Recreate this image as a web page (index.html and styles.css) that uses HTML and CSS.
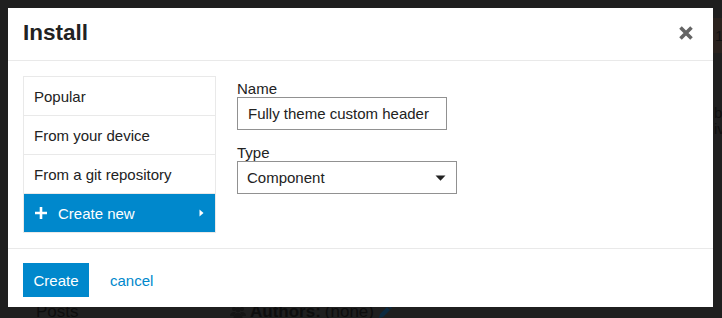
FILE: index.html
```html
<!DOCTYPE html>
<html lang="en">
<head>
<meta charset="utf-8">
<title>Install</title>
<link rel="stylesheet" href="styles.css">
</head>
<body>
<div class="page">
  <div class="page-main">
    <div class="page-row">
      <span class="page-posts">Posts</span>
      <span class="page-authors">
        <svg class="users-icon" width="16" height="12" viewBox="0 0 16 12"><circle cx="4" cy="3" r="2"/><circle cx="12" cy="3" r="2"/><circle cx="8" cy="4" r="2.4"/><path d="M0 10c0-3 2-4 4-4s2 1 2 1-2 1-2 3z"/><path d="M16 10c0-3-2-4-4-4s-2 1-2 1 2 1 2 3z"/><path d="M3.5 12c0-3 2-5 4.5-5s4.5 2 4.5 5z"/></svg>
        <b>Authors:</b> (none)
        <svg class="pencil-icon" width="14" height="14" viewBox="0 0 14 14"><path d="M1 13l1-4 7-7 3 3-7 7zM10 1l1-1 3 3-1 1z"/></svg>
      </span>
    </div>
  </div>
  <aside class="page-side">
    <div class="page-badge">1</div>
    <p class="page-frag">b</p>
    <p class="page-frag">iv</p>
  </aside>
</div>

<div class="modal" role="dialog" aria-labelledby="modal-title">
  <header class="modal-header">
    <h1 id="modal-title" class="modal-title">Install</h1>
    <button class="modal-close" aria-label="close">
      <svg width="16" height="16" viewBox="0 0 16 16"><path d="M2.5 2.5L13.5 13.5M13.5 2.5L2.5 13.5" stroke="#646464" stroke-width="3.6" stroke-linecap="butt"/></svg>
    </button>
  </header>
  <div class="modal-body">
    <ul class="install-options">
      <li class="install-option">Popular</li>
      <li class="install-option">From your device</li>
      <li class="install-option">From a git repository</li>
      <li class="install-option is-active">
        <svg class="plus-icon" width="12" height="12" viewBox="0 0 12 12"><path d="M6 0v12M0 6h12" stroke="#fff" stroke-width="2.6"/></svg>
        <span class="option-label">Create new</span>
        <svg class="caret-right" width="5" height="8" viewBox="0 0 5 8"><path d="M0.5 0.5L4.5 4L0.5 7.5z" fill="#fff"/></svg>
      </li>
    </ul>
    <form class="install-form">
      <label class="field-label" for="theme-name">Name</label>
      <input id="theme-name" class="text-input" type="text" value="Fully theme custom header">
      <label class="field-label" for="theme-type">Type</label>
      <div class="select-box" id="theme-type">
        <span>Component</span>
        <svg width="11" height="6" viewBox="0 0 11 6"><path d="M0.5 0.5h10L5.5 5.8z" fill="#222"/></svg>
      </div>
    </form>
  </div>
  <footer class="modal-footer">
    <button class="btn-primary">Create</button>
    <a class="cancel-link" href="#">cancel</a>
  </footer>
</div>
</body>
</html>
```

FILE: styles.css
```css
* { box-sizing: border-box; }

html, body {
  margin: 0;
  padding: 0;
  background: #1f1f1f;
  font-family: "Liberation Sans", Arial, Helvetica, sans-serif;
  overflow: hidden;
}

/* dimmed page behind the modal */
.page {
  display: grid;
  grid-template-columns: 713px 1fr;
  height: 318px;
  overflow: hidden;
}

.page-main {
  padding-top: 302px;
}

.page-row {
  display: flex;
  align-items: center;
  color: #0d0d0d;
  font-size: 16px;
}

.page-posts {
  margin-left: 36px;
  width: 194px;
  font-size: 17px;
}

.page-authors {
  display: flex;
  align-items: center;
  gap: 4px;
  font-size: 17px;
}

.users-icon { fill: #151515; }
.pencil-icon { fill: #0c2a40; }

.page-side {
  padding-top: 18px;
}

.page-badge {
  height: 35px;
  background: #2a221e;
  color: #111;
  font-size: 15px;
  line-height: 35px;
  padding-left: 2px;
}

.page-frag {
  margin: 0;
  color: #0f0f0f;
  font-size: 15px;
  line-height: 16px;
  padding-left: 1px;
}

.page-frag:first-of-type {
  margin-top: 52px;
}

/* modal */
.modal {
  position: absolute;
  left: 8px;
  top: 8px;
  width: 705px;
  height: 299px;
  background: #fff;
  color: #222;
  display: flex;
  flex-direction: column;
}

.modal-header {
  display: flex;
  align-items: center;
  justify-content: space-between;
  padding: 11px 19px 14px 15px;
  border-bottom: 1px solid #e9e9e9;
}

.modal-title {
  margin: 0;
  font-size: 22.5px;
  line-height: 27px;
  font-weight: bold;
  color: #222;
}

.modal-close {
  border: 0;
  background: none;
  padding: 0;
  width: 16px;
  height: 16px;
  display: block;
  cursor: pointer;
}

.modal-close svg { display: block; }

.modal-body {
  display: flex;
  gap: 21px;
  padding: 15px 15px 15px 15px;
  border-bottom: 1px solid #e9e9e9;
}

.install-options {
  list-style: none;
  margin: 0;
  padding: 0;
  width: 193px;
  border: 1px solid #e9e9e9;
}

.install-option {
  height: 39px;
  display: flex;
  align-items: center;
  padding: 0 10px;
  font-size: 15px;
  color: #222;
  border-bottom: 1px solid #e9e9e9;
}

.install-option:last-child {
  border-bottom: 0;
  height: 38px;
}

.install-option.is-active {
  background: #0088cc;
  color: #fff;
  padding: 0 11px 0 11px;
}

.plus-icon { flex: none; margin-right: 11px; }

.option-label { flex: 1; }

.caret-right { flex: none; }

.install-form {
  display: flex;
  flex-direction: column;
  align-items: flex-start;
  padding-top: 4px;
}

.field-label {
  font-size: 15px;
  line-height: 17px;
  color: #222;
}

.text-input {
  width: 210px;
  height: 33px;
  margin: 0 0 14px 0;
  padding: 0 10px;
  border: 1px solid #919191;
  border-radius: 0;
  font-family: inherit;
  font-size: 15px;
  color: #222;
  outline: none;
}

.select-box {
  width: 220px;
  height: 33px;
  border: 1px solid #919191;
  display: flex;
  align-items: center;
  justify-content: space-between;
  padding: 0 10px 0 9px;
  font-size: 15px;
  color: #222;
}

.select-box svg { display: block; }

.modal-footer {
  display: flex;
  align-items: center;
  padding: 14px 15px 10px;
}

.btn-primary {
  height: 34px;
  width: 66px;
  border: 0;
  background: #0088cc;
  color: #fff;
  font-family: inherit;
  font-size: 15px;
  padding: 0;
  cursor: pointer;
}

.cancel-link {
  margin-left: 21px;
  color: #0088cc;
  font-size: 15px;
  text-decoration: none;
}
```
